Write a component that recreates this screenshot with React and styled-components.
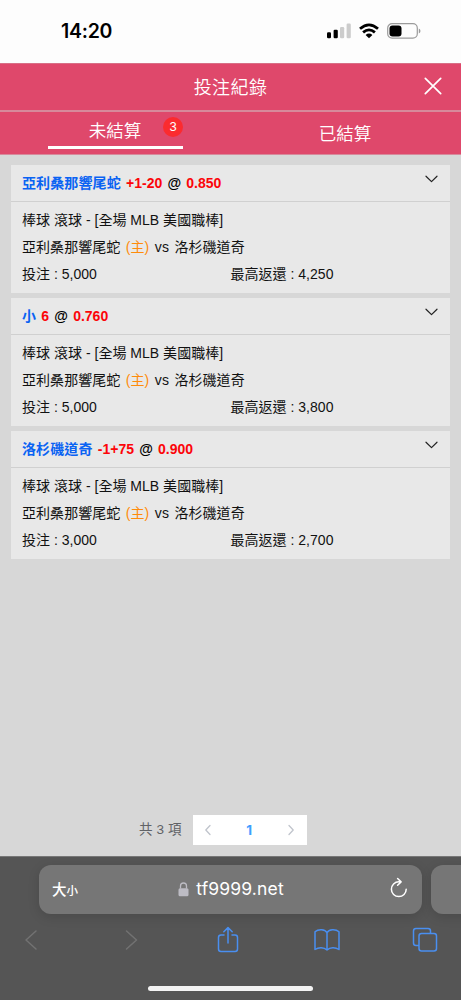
import React from "react";
import styled, { createGlobalStyle } from "styled-components";

const GlobalStyle = createGlobalStyle`
  * { box-sizing: border-box; }
  body {
    margin: 0;
    background: #d7d7d7;
    font-family: "Liberation Sans", "Noto Sans CJK TC", sans-serif;
  }
  svg { display: block; flex: none; }
`;

const Screen = styled.div`
  width: 461px;
  height: 1000px;
  display: flex;
  flex-direction: column;
  overflow: hidden;
  background: #d7d7d7;
`;

const StatusBar = styled.div`
  height: 63px;
  flex: none;
  display: flex;
  align-items: flex-start;
  justify-content: space-between;
  padding: 19px 40px 0 61px;
  background: #fdfdfd;
`;

const Clock = styled.div`
  font: 600 19.5px/25px Inter, sans-serif;
  letter-spacing: -0.25px;
  color: #000;
`;

const StatusIcons = styled.div`
  display: flex;
  align-items: flex-start;
  padding-top: 4px;
  gap: 8px;
`;

const TitleBar = styled.header`
  height: 49px;
  flex: none;
  display: grid;
  grid-template-columns: 60px 1fr 60px;
  align-items: center;
  background: #df486b;
  border-top: 1px solid #d86f86;
  border-bottom: 2px solid #d7899b;
  color: #fff;
`;

const Title = styled.h1`
  grid-column: 2;
  margin: 0;
  padding-top: 1px;
  text-align: center;
  font-size: 18px;
  font-weight: 350;
  line-height: 26px;
  letter-spacing: 0.4px;
`;

const CloseButton = styled.button`
  justify-self: end;
  margin: 0 18px 2px 0;
  padding: 0;
  border: 0;
  background: none;
`;

const Tabs = styled.nav`
  height: 43px;
  flex: none;
  display: grid;
  grid-template-columns: 1fr 1fr;
  background: #df486b;
  border-bottom: 1px solid #d7899b;
`;

const Tab = styled.div`
  position: relative;
  width: 135px;
  margin-left: ${(p) => (p.$active ? 48 : 47)}px;
  height: ${(p) => (p.$active ? 37 : 42)}px;
  padding-right: ${(p) => (p.$active ? 1 : 0)}px;
  border-bottom: ${(p) => (p.$active ? "3px solid #fff" : "0")};
  text-align: center;
  font-size: 17.5px;
  font-weight: 350;
  line-height: ${(p) => (p.$active ? 38 : 44)}px;
  color: #fff;
`;

const Badge = styled.span`
  position: absolute;
  top: 5px;
  right: 0;
  width: 20px;
  height: 20px;
  border-radius: 50%;
  background: #fb2b2f;
  font-size: 13px;
  line-height: 20px;
`;

const BetList = styled.main`
  flex: 1;
  display: flex;
  flex-direction: column;
  gap: 5px;
  padding: 10px 11px 0;
`;

const Card = styled.article`
  height: 128px;
  background: #e8e8e8;
`;

const CardHead = styled.div`
  height: 37px;
  display: flex;
  justify-content: space-between;
  padding: 0 12px 0 11px;
  border-bottom: 1px solid #d0d0d0;
  font-size: 14px;
  font-weight: 700;
  line-height: 36px;
  color: #000;
  svg { margin-top: 10px; }
`;

const Selection = styled.span`
  color: #0a63f3;
  letter-spacing: 0.12px;
`;

const Figure = styled.span`
  color: #fc0509;
`;

const BetTitle = styled.div`
  display: flex;
  gap: 5.2px;
`;

const CardBody = styled.div`
  padding: 5px 11px;
  font-size: 14px;
  line-height: 27px;
  color: #111;
`;

const Line = styled.div`
  display: flex;
  gap: ${(p) => p.$gap || 0}px;
  letter-spacing: ${(p) => p.$spacing || 0}px;
  white-space: pre;
`;

const Home = styled.span`
  color: #ff8b0a;
`;

const Amount = styled.div`
  flex: 1 1 50%;
`;

const Pagination = styled.div`
  height: 30px;
  flex: none;
  display: flex;
  align-items: center;
  gap: 11px;
  margin: 0 0 11px 139px;
  font-size: 13.5px;
  line-height: 30px;
  letter-spacing: 0.15px;
  color: #606266;
`;

const Total = styled.span`
  height: 30px;
`;

const Pager = styled.div`
  width: 114px;
  height: 30px;
  display: flex;
  align-items: center;
  justify-content: space-between;
  padding: 0 12px 0 11px;
  background: #fff;
`;

const CurrentPage = styled.span`
  font: 700 13.5px/30px Inter, sans-serif;
  color: #409eff;
`;

const Browser = styled.footer`
  height: 144px;
  flex: none;
  background: #555;
  border-top: 1px solid #777;
`;

const AddressRow = styled.div`
  display: flex;
  gap: 9px;
  padding: 8px 0 0 39px;
`;

const AddressBar = styled.div`
  width: 383px;
  height: 49px;
  flex: none;
  display: grid;
  grid-template-columns: 60px 1fr 60px;
  align-items: center;
  padding: 0 14px 0 13px;
  border-radius: 12px;
  background: #767676;
  box-shadow: 0 3px 12px rgba(0, 0, 0, 0.14);
  color: #fff;
  > svg {
    justify-self: end;
    margin-bottom: 3px;
  }
`;

const NextTab = styled.div`
  width: 50px;
  height: 49px;
  flex: none;
  border-radius: 12px 0 0 12px;
  background: #767676;
  box-shadow: 0 3px 12px rgba(0, 0, 0, 0.14);
`;

const TextSize = styled.div`
  padding-bottom: 3px;
  font-size: 14.5px;
  font-weight: 500;
  small { font-size: 11.5px; }
`;

const Address = styled.div`
  display: flex;
  align-items: center;
  justify-content: center;
  gap: 7px;
  padding: 0 0 1px 2px;
  font: 400 17.5px/24px Inter, sans-serif;
  letter-spacing: 0.15px;
`;

const Toolbar = styled.div`
  display: flex;
  justify-content: space-between;
  align-items: center;
  height: 28px;
  margin-top: 12px;
  padding: 0 23px 0 18px;
`;

const Tool = styled.div`
  width: 26px;
  display: flex;
  justify-content: center;
`;

const HomeIndicator = styled.div`
  width: 165px;
  height: 5px;
  margin: 32px auto 0;
  border-radius: 3px;
  background: #f3f3f3;
`;

const Stroke = ({ w, h, d, color, width = 1.5, cap = "round" }) => (
  <svg width={w} height={h} viewBox={`0 0 ${w} ${h}`} fill="none" stroke={color} strokeWidth={width} strokeLinecap={cap} strokeLinejoin="round">
    <path d={d} />
  </svg>
);

const Signal = () => (
  <svg width="24" height="16" viewBox="0 0 24 16">
    <rect x="0" y="9.3" width="4" height="5.9" rx="1.2" fill="#000" />
    <rect x="6.6" y="6.8" width="4.2" height="8.4" rx="1.2" fill="#000" />
    <rect x="13" y="4" width="4.2" height="11.2" rx="1.2" fill="#ccc" />
    <rect x="19.6" y="0.6" width="4.2" height="14.6" rx="1.2" fill="#ccc" />
  </svg>
);

const Wifi = () => (
  <svg width="20" height="16" viewBox="0 0 20 16" fill="none" stroke="#000" strokeWidth="2.8">
    <path d="M1 5.8 Q10 -2 19 5.8" />
    <path d="M4.1 9.4 Q10 4.4 15.9 9.4" />
    <path d="M6.6 11.9 Q10 9.2 13.4 11.9 L10 15.3 Z" fill="#000" stroke="none" />
  </svg>
);

const Battery = () => (
  <svg width="34" height="16" viewBox="0 0 34 16">
    <rect x="0.7" y="0.7" width="29.6" height="14.4" rx="4.4" fill="none" stroke="#9b9b9b" strokeWidth="1.2" />
    <rect x="2.5" y="2.4" width="12" height="11" rx="3" fill="#000" />
    <path d="M31.8 5.6 Q33.5 6.2 33.5 8 Q33.5 9.8 31.8 10.4 Z" fill="#9b9b9b" />
  </svg>
);

const Lock = () => (
  <svg width="11" height="15" viewBox="0 0 11 15">
    <rect x="0.5" y="6.2" width="10" height="8" rx="1.5" fill="#bdbcc4" />
    <path d="M2.5 6.5 V4 a3 3 0 0 1 6 0 V6.5" fill="none" stroke="#bdbcc4" strokeWidth="1.3" />
  </svg>
);

const BLUE = "#4a8ff0";

const tools = [
  { name: "back", w: 14, h: 22, d: "M12 2 L2 11 L12 20", color: "#727272" },
  { name: "forward", w: 16, h: 22, d: "M4.5 2 L14.5 11 L4.5 20", color: "#727272" },
  { name: "share", w: 22, h: 28, d: "M7 9 H4 Q1.5 9 1.5 11.5 V23 Q1.5 25.5 4 25.5 H18 Q20.5 25.5 20.5 23 V11.5 Q20.5 9 18 9 H15 M11 17 V1.8 M6.8 5.8 L11 1.6 L15.2 5.8", color: BLUE },
  { name: "bookmarks", w: 26, h: 24, d: "M13 4.6 C11 1 4.5 0.6 1 3.8 V21.5 C4.5 19 10 19 13 22 C16 19 21.5 19 25 21.5 V3.8 C21.5 0.6 15 1 13 4.6 V22", color: BLUE },
  { name: "tabs", w: 26, h: 26, d: "M7 18.5 H4 Q1.5 18.5 1.5 16 V4 Q1.5 1.5 4 1.5 H16 Q18.5 1.5 18.5 4 V6.5 M9.5 6.5 H22 Q24.5 6.5 24.5 9 V21.5 Q24.5 24 22 24 H9.5 Q7 24 7 21.5 V9 Q7 6.5 9.5 6.5 Z", color: BLUE },
];

const bets = [
  { pick: "亞利桑那響尾蛇", line: "+1-20", odds: "0.850", stake: "5,000", payout: "4,250" },
  { pick: "小", line: "6", odds: "0.760", stake: "5,000", payout: "3,800" },
  { pick: "洛杉磯道奇", line: "-1+75", odds: "0.900", stake: "3,000", payout: "2,700" },
];

const BetCard = ({ bet }) => (
  <Card>
    <CardHead>
      <BetTitle>
        <Selection>{bet.pick}</Selection>
        <Figure>{bet.line}</Figure>
        <span>@</span>
        <Figure>{bet.odds}</Figure>
      </BetTitle>
      <Stroke w={13} h={8} d="M1 1.2 L6.5 6.6 L12 1.2" color="#222" width={1.2} />
    </CardHead>
    <CardBody>
      <Line $spacing={0.02}>棒球 滾球 - [全場 MLB 美國職棒]</Line>
      <Line $gap={5.5} $spacing={0.05}>
        <span>亞利桑那響尾蛇</span>
        <Home>(主)</Home>
        <span>vs</span>
        <span>洛杉磯道奇</span>
      </Line>
      <Line $spacing={0.02}>
        <Amount>投注 : {bet.stake}</Amount>
        <Amount>最高返還 : {bet.payout}</Amount>
      </Line>
    </CardBody>
  </Card>
);

export default function App() {
  return (
    <>
      <GlobalStyle />
      <Screen>
        <StatusBar>
          <Clock>14:20</Clock>
          <StatusIcons>
            <Signal />
            <Wifi />
            <Battery />
          </StatusIcons>
        </StatusBar>
        <TitleBar>
          <Title>投注紀錄</Title>
          <CloseButton aria-label="關閉">
            <Stroke w={20} h={20} d="M2.3 2.3 L17.7 17.7 M17.7 2.3 L2.3 17.7" color="#fff" width={1.7} />
          </CloseButton>
        </TitleBar>
        <Tabs>
          <Tab $active>
            未結算<Badge>3</Badge>
          </Tab>
          <Tab>已結算</Tab>
        </Tabs>
        <BetList>
          {bets.map((bet) => (
            <BetCard key={bet.pick} bet={bet} />
          ))}
        </BetList>
        <Pagination>
          <Total>共 3 項</Total>
          <Pager>
            <Stroke w={8} h={12} d="M6 1.5 L1.8 6 L6 10.5" color="#c0c4cc" width={1.3} />
            <CurrentPage>1</CurrentPage>
            <Stroke w={8} h={12} d="M2 1.5 L6.2 6 L2 10.5" color="#c0c4cc" width={1.3} />
          </Pager>
        </Pagination>
        <Browser>
          <AddressRow>
            <AddressBar>
              <TextSize>
                大<small>小</small>
              </TextSize>
              <Address>
                <Lock />
                tf9999.net
              </Address>
              <Stroke w={19} h={22} d="M10.8 4.8 H9.8 A7.4 7.4 0 1 0 17.2 12.2 M8.6 1.5 L12.1 4.9 L8.6 8.3" color="#fff" width={1.5} />
            </AddressBar>
            <NextTab />
          </AddressRow>
          <Toolbar>
            {tools.map(({ name, ...icon }) => (
              <Tool key={name}>
                <Stroke {...icon} />
              </Tool>
            ))}
          </Toolbar>
          <HomeIndicator />
        </Browser>
      </Screen>
    </>
  );
}
